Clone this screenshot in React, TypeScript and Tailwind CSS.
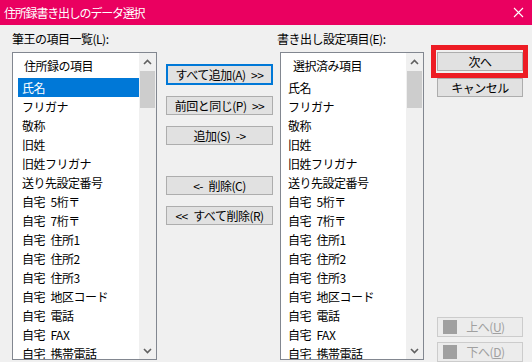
import React from "react";

const FONT = { fontFamily: '"Noto Sans CJK JP", "Noto Sans", sans-serif' };

const ITEMS = [
  "氏名",
  "フリガナ",
  "敬称",
  "旧姓",
  "旧姓フリガナ",
  "送り先設定番号",
  "自宅\u20025桁〒",
  "自宅\u20027桁〒",
  "自宅\u2002住所1",
  "自宅\u2002住所2",
  "自宅\u2002住所3",
  "自宅\u2002地区コード",
  "自宅\u2002電話",
  "自宅\u2002FAX",
  "自宅\u2002携帯電話",
];

function Chevron({ up }: { up?: boolean }) {
  return (
    <svg width="9" height="6" viewBox="0 0 9 6">
      <polyline
        points={up ? "1,5 4.5,1.5 8,5" : "1,1 4.5,4.5 8,1"}
        fill="none"
        stroke="#606060"
        strokeWidth="1.6"
      />
    </svg>
  );
}

function ScrollBar() {
  return (
    <div className="flex w-[17px] shrink-0 flex-col bg-[#F0F0F0]">
      <div className="flex h-[17px] items-center justify-center">
        <Chevron up />
      </div>
      <div className="mx-[1px] mt-[1px] h-[37px] bg-[#CDCDCD]" />
      <div className="flex-1" />
      <div className="flex h-[17px] items-center justify-center">
        <Chevron />
      </div>
    </div>
  );
}

interface ListBoxProps {
  header: string;
  selected?: number;
  headerPad: string;
  itemPad: string;
}

function ListBox({ header, selected, headerPad, itemPad }: ListBoxProps) {
  return (
    <div className="flex h-[308px] overflow-hidden border border-[#828790] bg-white">
      <div className="flex-1 overflow-hidden pl-[5px]">
        <div className={`flex h-[25px] items-center ${headerPad}`}>{header}</div>
        {ITEMS.map((item, i) => (
          <div
            key={item}
            className={`flex h-[19px] items-center whitespace-nowrap ${itemPad} ${
              i === selected ? "bg-[#0078D7] text-white" : ""
            }`}
          >
            {item}
          </div>
        ))}
      </div>
      <ScrollBar />
    </div>
  );
}

function Button({
  children,
  focused,
  className = "",
}: {
  children: React.ReactNode;
  focused?: boolean;
  className?: string;
}) {
  return (
    <div
      className={`flex items-center justify-center whitespace-pre bg-[#E1E1E1] ${
        focused ? "h-[21px] border-2 border-[#0078D7]" : "h-[19px] border border-[#ADADAD]"
      } ${className}`}
    >
      {children}
    </div>
  );
}

function DisabledButton({ label, key_ }: { label: string; key_: string }) {
  return (
    <div className="flex h-[20px] items-center border border-[#CCCCCC] bg-[#ECECEC] pl-[5px] text-[#A0A0A0]">
      <div className="h-[14px] w-[14px] bg-[#A0A0A0]" />
      <div className="flex-1 pr-[8px] text-center">
        {label}(<span className="underline">{key_}</span>)
      </div>
    </div>
  );
}

export default function App() {
  return (
    <div
      className="relative h-[362px] w-[532px] overflow-hidden bg-[#F0F0F0] text-[12px] tracking-[-0.5px] text-black"
      style={FONT}
    >
      <div className="flex h-[25px] items-center justify-between bg-[#EA0060] pl-[4px] pr-[8px] text-white">
        <span className="tracking-[-1.2px]">住所録書き出しのデータ選択</span>
        <svg width="11" height="11" viewBox="0 0 11 11">
          <path d="M1 1 L10 10 M10 1 L1 10" stroke="white" strokeWidth="1.1" />
        </svg>
      </div>

      <div className="flex">
        <div className="ml-[12px] w-[145px]">
          <div className="mb-[5px] mt-[6px] h-[16px] leading-[16px]">筆王の項目一覧(L):</div>
          <ListBox header="住所録の項目" selected={0} headerPad="pl-[6px]" itemPad="pl-[4px]" />
        </div>

        <div className="ml-[9px] flex w-[107px] flex-col pt-[39px]">
          <Button focused>{"すべて追加(A)\u2002>>"}</Button>
          <Button className="mt-[11px]">{"前回と同じ(P)\u2002>>"}</Button>
          <Button className="mt-[11px]">{"追加(S)\u2002->"}</Button>
          <Button className="mt-[31px]">{"<-\u2002削除(C)"}</Button>
          <Button className="mt-[11px]">{"<<\u2002すべて削除(R)"}</Button>
        </div>

        <div className="ml-[7px] w-[144px]">
          <div className="-ml-[3px] mb-[5px] mt-[6px] h-[16px] leading-[16px]">書き出し設定項目(E):</div>
          <ListBox header="選択済み項目" headerPad="pl-[7px]" itemPad="pl-[2px]" />
        </div>

        <div className="ml-[13px] flex h-[337px] w-[86px] flex-col pt-[27px]">
          <Button>次へ</Button>
          <Button className="mt-[7px]">キャンセル</Button>
          <div className="flex-1" />
          <DisabledButton label="上へ" key_="U" />
          <div className="mt-[5px]">
            <DisabledButton label="下へ" key_="D" />
          </div>
        </div>
      </div>

      <div className="absolute left-[431px] top-[45px] h-[33px] w-[97px] border-[5px] border-[#ED1C24]" />
    </div>
  );
}
